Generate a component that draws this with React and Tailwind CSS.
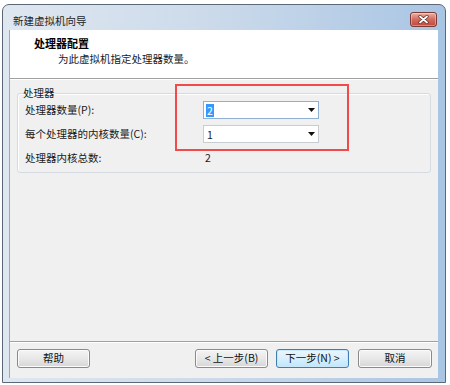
import React from 'react'

const FONT = { fontFamily: '"Segoe UI", "Noto Sans CJK SC", "Noto Sans", sans-serif' }

function CloseButton() {
  return (
    <div className="w-[27px] h-[15px] rounded-[3px] border border-[#7a3a33] bg-gradient-to-b from-[#eab0a5] via-[#d26a5d] to-[#c0483a] flex items-center justify-center shadow-[inset_0_0_0_1px_rgba(255,255,255,0.35)]">
      <svg width="11" height="9" viewBox="0 0 11 9">
        <path d="M2 1.5 L9 7.5 M9 1.5 L2 7.5" stroke="#5a2a25" strokeWidth="3.2" strokeLinecap="round" />
        <path d="M2 1.5 L9 7.5 M9 1.5 L2 7.5" stroke="#ffffff" strokeWidth="1.8" strokeLinecap="round" />
      </svg>
    </div>
  )
}

function Combo({ value, selected, focused }) {
  return (
    <div
      className={`w-[116px] h-[18px] bg-white border flex items-center justify-between pl-[2px] pr-[3px] ${
        focused ? 'border-[#8fb0d3]' : 'border-[#c9ccd1]'
      }`}
    >
      <span
        className={`text-[10.5px] leading-[13px] px-[1px] ${
          selected ? 'bg-[#3399ff] text-white' : 'text-[#1a1a1a]'
        }`}
      >
        {value}
      </span>
      <svg width="7" height="4" viewBox="0 0 7 4">
        <path d="M0 0 H7 L3.5 4 Z" fill="#111" />
      </svg>
    </div>
  )
}

function Btn({ children, primary, w = 'w-[73px]' }) {
  return (
    <div
      className={`${w} h-[19px] rounded-[3px] border flex items-center justify-center text-[10.5px] leading-none text-[#111] ${
        primary
          ? 'border-[#3c7fb1] bg-gradient-to-b from-[#eaf6fd] via-[#d9f0fc] to-[#bee6fd] shadow-[inset_0_0_0_1px_#c9e8fb]'
          : 'border-[#8a8a8a] bg-gradient-to-b from-[#f4f4f4] via-[#e8e8e8] to-[#d6d6d6] shadow-[inset_0_0_0_1px_#fbfbfb]'
      }`}
    >
      {children}
    </div>
  )
}

export default function App() {
  return (
    <div className="w-[450px] h-[385px] bg-white pt-[4px] pl-[2px] relative" style={FONT}>
      <div className="w-[444px] h-[379px] rounded-t-[7px] border border-[#5b6877] bg-gradient-to-r from-[#dfe7f0] via-[#cad9ea] to-[#a9c5e4] flex flex-col">
        {/* title bar */}
        <div className="h-[25px] flex items-start justify-between pl-[10px] pr-[8px]">
          <span className="text-[10.5px] leading-[14px] mt-[9px] text-[#1e1e1e]">新建虚拟机向导</span>
          <div className="mt-[7px]">
            <CloseButton />
          </div>
        </div>

        {/* client area */}
        <div className="flex pl-[6px]">
          <div className="w-[429px] h-[348px] border-l border-[#9aa8b8] bg-[#f0f0f0] flex flex-col text-[10.5px] text-[#1a1a1a]">
            {/* header */}
            <div className="h-[48px] bg-white flex flex-col pl-[24px] pt-[6px]">
              <span className="font-bold text-[11px] leading-[14px] text-black">处理器配置</span>
              <span className="leading-[14px] mt-[2px] ml-[24px] text-[#1a1a1a]">为此虚拟机指定处理器数量。</span>
            </div>
            <div className="h-[1px] bg-[#a0a0a0]" />
            <div className="h-[1px] bg-white" />

            {/* body */}
            <div className="flex-1 pl-[7px]">
              <fieldset className="mt-[6px] w-[414px] h-[87px] rounded-[3px] border border-[#d5dbe1] pl-[5px] shadow-[inset_1px_1px_0_#ffffff]">
                <legend className="leading-[14px] px-0">处理器</legend>
                <div className="flex flex-col ml-[2px] mt-[1px] gap-[6px]">
                  <div className="flex items-center h-[18px]">
                    <span className="w-[178px] leading-[14px]">处理器数量(P):</span>
                    <Combo value="2" selected focused />
                  </div>
                  <div className="flex items-center h-[18px]">
                    <span className="w-[178px] leading-[14px]">每个处理器的内核数量(C):</span>
                    <Combo value="1" />
                  </div>
                  <div className="flex items-center h-[18px]">
                    <span className="w-[180px] leading-[14px]">处理器内核总数:</span>
                    <span className="leading-[14px]">2</span>
                  </div>
                </div>
              </fieldset>
            </div>

            {/* footer */}
            <div className="h-[1px] bg-[#a0a0a0]" />
            <div className="h-[1px] bg-white" />
            <div className="h-[35px] flex items-start pt-[6px] pl-[7px]">
              <Btn>帮助</Btn>
              <div className="flex-1" />
              <Btn>&lt; 上一步(B)</Btn>
              <div className="w-[8px]" />
              <Btn primary>下一步(N) &gt;</Btn>
              <div className="w-[9px]" />
              <Btn w="w-[74px]">取消</Btn>
              <div className="w-[6px]" />
            </div>
          </div>
        </div>
      </div>

      {/* annotation box */}
      <div className="absolute left-[175px] top-[84px] w-[174px] h-[67px] border-2 border-[#f24a4a] pointer-events-none" />
    </div>
  )
}
